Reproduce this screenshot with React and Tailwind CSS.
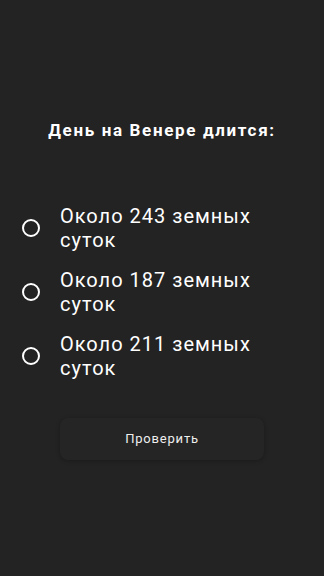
const options = ["Около 243 земных суток", "Около 187 земных суток", "Около 211 земных суток"];

export default function App() {
  return (
    <div
      className="w-[324px] h-[576px] bg-[#232323] text-white flex flex-col"
      style={{ fontFamily: "Roboto, 'Noto Sans', sans-serif" }}
    >
      <h1 className="mt-[117px] text-center text-[17px] font-bold tracking-[1.65px] leading-[26px]">
        День на Венере длится:
      </h1>

      <div className="mt-[61px] flex flex-col gap-[16px]">
        {options.map((o) => (
          <label key={o} className="flex items-center h-[48px]">
            <span className="ml-[22px] w-[18px] h-[18px] rounded-full border-2 border-white shrink-0" />
            <span className="ml-[20px] w-[215px] text-[20px] leading-[24px] tracking-[1px] font-normal">
              {o}
            </span>
          </label>
        ))}
      </div>

      <button className="mt-[38px] mx-auto w-[204px] h-[42px] rounded-[8px] bg-[#252525] shadow-[0_1px_4px_rgba(0,0,0,0.25)] text-[13px] tracking-[0.8px] font-normal text-[#eeeeee]">
        Проверить
      </button>
    </div>
  );
}
